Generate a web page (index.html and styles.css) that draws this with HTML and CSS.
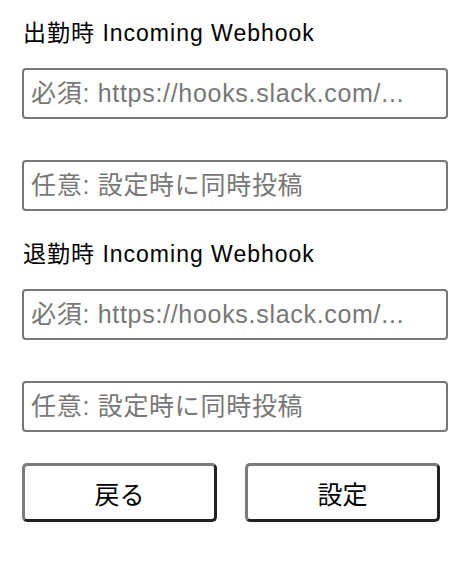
FILE: index.html
```html
<!DOCTYPE html>
<html lang="ja">
<head>
<meta charset="utf-8">
<title>Webhook 設定</title>
<link rel="stylesheet" href="styles.css">
</head>
<body>
<form class="settings">
  <section class="group">
    <label class="label" for="in-url">出勤時 Incoming Webhook</label>
    <input class="field" id="in-url" type="text" placeholder="必須: https://hooks.slack.com/...">
    <input class="field field-gap" type="text" placeholder="任意: 設定時に同時投稿">
  </section>
  <section class="group group-next">
    <label class="label" for="out-url">退勤時 Incoming Webhook</label>
    <input class="field" id="out-url" type="text" placeholder="必須: https://hooks.slack.com/...">
    <input class="field field-gap" type="text" placeholder="任意: 設定時に同時投稿">
  </section>
  <div class="actions">
    <button class="btn" type="button">戻る</button>
    <button class="btn" type="button">設定</button>
  </div>
</form>
</body>
</html>
```
FILE: styles.css
```css
html, body {
  margin: 0;
  padding: 0;
  background: #ffffff;
}

body {
  font-family: "Liberation Sans", "Noto Sans CJK JP", sans-serif;
  color: #000000;
}

.settings {
  display: flex;
  flex-direction: column;
  padding: 18px 26px 0 22px;
  width: 426px;
}

.group {
  display: flex;
  flex-direction: column;
}

.group-next {
  margin-top: 28px;
}

.label {
  display: block;
  font-size: 23px;
  line-height: 30px;
  height: 30px;
  padding-left: 1px;
  margin-bottom: 20px;
  letter-spacing: 1px;
  white-space: nowrap;
}

.field {
  box-sizing: border-box;
  width: 426px;
  height: 51px;
  margin: 0;
  padding: 0 7px;
  border: 2px solid #777777;
  border-radius: 4px;
  background: #ffffff;
  font-family: "Liberation Sans", "Noto Sans CJK JP", sans-serif;
  font-size: 25px;
  letter-spacing: 0.7px;
  color: #000000;
  outline: none;
}

.field::placeholder {
  color: #777777;
  opacity: 1;
}

.field-gap {
  margin-top: 41px;
}

.actions {
  display: flex;
  gap: 28px;
  margin-top: 31px;
}

.btn {
  box-sizing: border-box;
  width: 195px;
  height: 59px;
  margin: 0;
  padding: 0;
  background: #ffffff;
  border-style: solid;
  border-width: 3px;
  border-color: #7b7b7b #222222 #222222 #7b7b7b;
  border-radius: 5px;
  font-family: "Liberation Sans", "Noto Sans CJK JP", sans-serif;
  font-size: 25px;
  color: #000000;
  cursor: pointer;
}
```
